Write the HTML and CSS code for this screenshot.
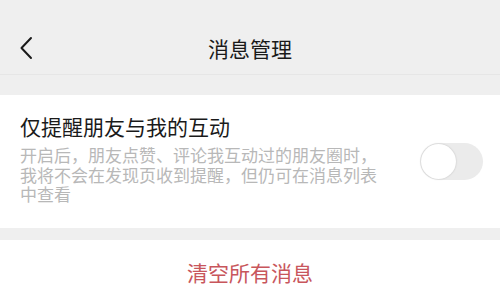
FILE: index.html
```html
<!DOCTYPE html>
<html lang="zh">
<head>
<meta charset="utf-8">
<link rel="stylesheet" href="styles.css">
</head>
<body>
<div class="header">
  <svg class="back" width="14" height="24" viewBox="0 0 14 24"><path d="M12 2 L2.5 12 L12 22" fill="none" stroke="#1a1a1a" stroke-width="2" stroke-linecap="round" stroke-linejoin="round"/></svg>
  <div class="title">消息管理</div>
</div>
<div class="card">
  <div class="text">
    <div class="item-title">仅提醒朋友与我的互动</div>
    <div class="desc">开启后，朋友点赞、评论我互动过的朋友圈时，我将不会在发现页收到提醒，但仍可在消息列表中查看</div>
  </div>
  <div class="switch"><div class="knob"></div></div>
</div>
<div class="action">清空所有消息</div>
</body>
</html>
```
FILE: styles.css
```css
html, body {
  margin: 0;
  padding: 0;
  background: #efefef;
  font-family: "Noto Sans CJK SC", "Noto Sans", sans-serif;
}
body {
  width: 500px;
  height: 306px;
  overflow: hidden;
}
.header {
  position: relative;
  height: 74px;
  border-bottom: 1px solid #e6e6e6;
  display: flex;
  align-items: center;
  justify-content: center;
  margin-bottom: 20px;
}
.back {
  position: absolute;
  left: 19px;
  top: 36px;
}
.title {
  font-size: 21px;
  color: #1a1a1a;
  margin-top: 22px;
  line-height: 30px;
}
.card {
  background: #fff;
  height: 133px;
  box-sizing: border-box;
  padding: 16px 17px 0 20px;
  display: flex;
  align-items: flex-start;
  justify-content: space-between;
  margin-bottom: 12px;
}
.text {
  width: 370px;
}
.item-title {
  font-size: 21px;
  line-height: 30px;
  color: #1a1a1a;
}
.desc {
  margin-top: 4px;
  font-size: 17px;
  line-height: 19.5px;
  color: #b8b8b8;
  width: 368px;
}
.switch {
  margin-top: 32px;
  width: 63px;
  height: 37px;
  border-radius: 19px;
  background: #ebebeb;
  position: relative;
}
.knob {
  position: absolute;
  left: 1px;
  top: 1px;
  width: 35px;
  height: 35px;
  border-radius: 50%;
  background: #fff;
  box-shadow: 0 0 2px rgba(0,0,0,0.2);
}
.action {
  background: #fff;
  height: 66px;
  display: flex;
  align-items: center;
  justify-content: center;
  font-size: 21px;
  color: #c8565c;
  padding-bottom: 2px;
  box-sizing: border-box;
}
```
